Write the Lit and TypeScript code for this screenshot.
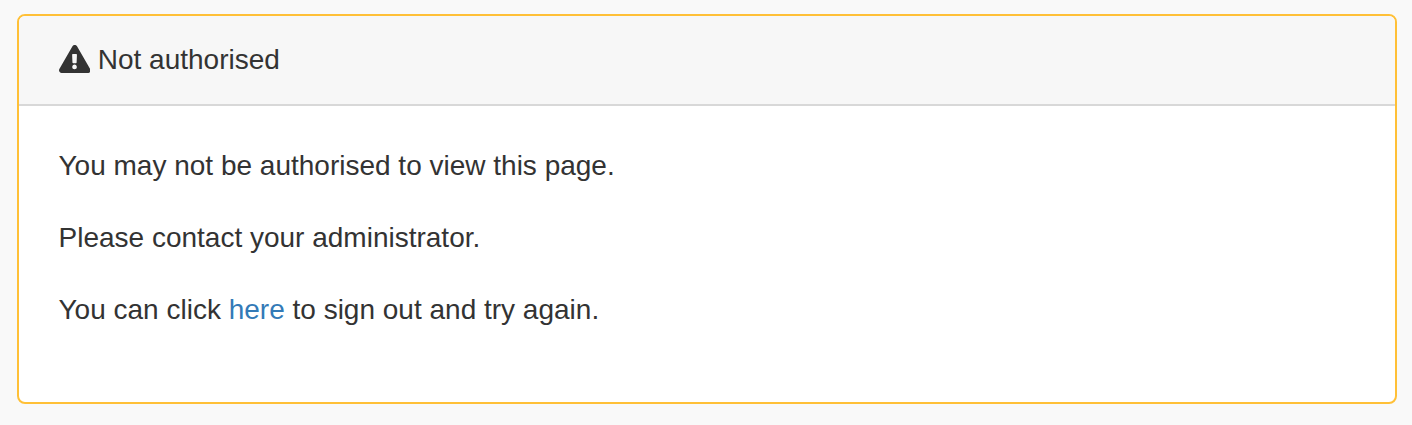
import { LitElement, html, css } from "lit";
import { customElement } from "lit/decorators.js";

@customElement("app-root")
export class AppRoot extends LitElement {
  static styles = css`
    :host {
      display: block;
      box-sizing: border-box;
      height: 425px;
      padding: 14px 15px 21px 17px;
      background: #f9f9f9;
      color: #333;
      font: 28px/40px "Liberation Sans", Arial, sans-serif;
    }
    .panel {
      box-sizing: border-box;
      height: 390px;
      border: 2px solid #ffc037;
      border-radius: 8px;
      background: #fff;
      overflow: hidden;
    }
    .heading {
      box-sizing: border-box;
      display: flex;
      align-items: center;
      gap: 8px;
      height: 90px;
      padding: 0 39.5px;
      background: #f7f7f7;
      border-bottom: 2px solid #d8d8d8;
    }
    .icon {
      width: 31.5px;
      height: 28px;
      flex: none;
      margin-bottom: 2px;
    }
    .title {
      margin-left: -0.25px;
    }
    .body {
      padding: 40px 39.5px;
    }
    p {
      margin: 0 0 32px;
    }
    a {
      color: #337ab7;
      text-decoration: none;
    }
  `;

  render() {
    return html`
      <section class="panel">
        <header class="heading">
          <svg class="icon" viewBox="0 0 576 512" preserveAspectRatio="none" aria-hidden="true">
            <path fill="#333" d="M569.5 440C588 472 564.800 512 527.900 512H48.100c-36.900 0-60-40.100-41.600-72L246.400 24c18.500-32 64.700-32 83.200 0L569.500 440zM284 358c-23 0-42 18-42 42s19 42 42 42 42-18 42-42-19-42-42-42zm-44-179 6 142c.3 6.400 5.600 11.300 12 11.300h52c6.400 0 11.600-5 12-11.300l6-142c.4-6.900-5.100-12.700-12-12.700h-64c-6.900 0-12.300 5.800-12 12.700z"/>
          </svg>
          <span class="title">Not authorised</span>
        </header>
        <div class="body">
          <p>You may not be authorised to view this page.</p>
          <p>Please contact your administrator.</p>
          <p>You can click <a href="#">here</a> to sign out and try again.</p>
        </div>
      </section>
    `;
  }
}
